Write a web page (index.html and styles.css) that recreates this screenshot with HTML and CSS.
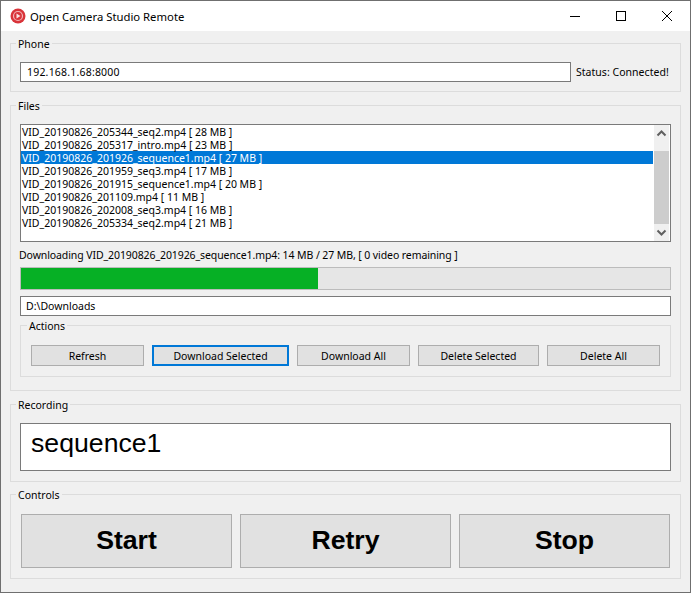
FILE: index.html
```html
<!DOCTYPE html>
<html lang="en">
<head>
<meta charset="utf-8">
<title>Open Camera Studio Remote</title>
<link rel="stylesheet" href="styles.css">
</head>
<body>
<div class="window">
  <header class="titlebar">
    <svg class="app-icon" width="16" height="16" viewBox="0 0 16 16">
      <circle cx="8" cy="8" r="7.500" fill="#d9343a"/>
      <circle cx="8" cy="8" r="4.500" fill="none" stroke="#f3b5b8" stroke-width="1.200"/>
      <path d="M6.500 5.500v5l4-2.500z" fill="#fbe3e4"/>
    </svg>
    <span class="title">Open Camera Studio Remote</span>
    <div class="win-controls">
      <svg width="46" height="30" viewBox="0 0 46 30"><path d="M18 15.500h10" stroke="#000" fill="none"/></svg>
      <svg width="46" height="30" viewBox="0 0 46 30"><rect x="18.500" y="10.500" width="9" height="9" stroke="#000" fill="none"/></svg>
      <svg width="46" height="30" viewBox="0 0 46 30"><path d="M18 10l10 10M28 10l-10 10" stroke="#000" fill="none"/></svg>
    </div>
  </header>
  <main class="content">
    <section class="group group-phone">
      <div class="legend">Phone</div>
      <div class="phone-row">
        <div class="field phone-field">192.168.1.68:8000</div>
        <span class="status">Status: Connected!</span>
      </div>
    </section>
    <section class="group group-files">
      <div class="legend">Files</div>
      <div class="listbox">
        <ul class="files">
          <li>VID_20190826_205344_seq2.mp4 [ 28 MB ]</li>
          <li>VID_20190826_205317_intro.mp4 [ 23 MB ]</li>
          <li class="selected">VID_20190826_201926_sequence1.mp4 [ 27 MB ]</li>
          <li>VID_20190826_201959_seq3.mp4 [ 17 MB ]</li>
          <li>VID_20190826_201915_sequence1.mp4 [ 20 MB ]</li>
          <li>VID_20190826_201109.mp4 [ 11 MB ]</li>
          <li>VID_20190826_202008_seq3.mp4 [ 16 MB ]</li>
          <li>VID_20190826_205334_seq2.mp4 [ 21 MB ]</li>
        </ul>
        <div class="scrollbar">
          <svg class="arrow" width="15" height="17" viewBox="0 0 15 17"><path d="M3.500 10.500l4-4 4 4" fill="none" stroke="#606060" stroke-width="2"/></svg>
          <div class="track"><div class="thumb"></div></div>
          <svg class="arrow" width="15" height="17" viewBox="0 0 15 17"><path d="M3.500 6.500l4 4 4-4" fill="none" stroke="#606060" stroke-width="2"/></svg>
        </div>
      </div>
      <div class="progress-label">Downloading VID_20190826_201926_sequence1.mp4: 14 MB / 27 MB, [ 0 video remaining ]</div>
      <div class="progress"><div class="progress-fill" style="width: 297px"></div></div>
      <div class="field path-field">D:\Downloads</div>
      <section class="group group-actions">
        <div class="legend">Actions</div>
        <div class="actions">
          <button class="btn btn-a">Refresh</button>
          <button class="btn btn-b focused">Download Selected</button>
          <button class="btn btn-a">Download All</button>
          <button class="btn btn-c">Delete Selected</button>
          <button class="btn btn-a">Delete All</button>
        </div>
      </section>
    </section>
    <section class="group group-recording">
      <div class="legend">Recording</div>
      <div class="field recording-field">sequence1</div>
    </section>
    <section class="group group-controls">
      <div class="legend">Controls</div>
      <div class="controls">
        <button class="btn big">Start</button>
        <button class="btn big">Retry</button>
        <button class="btn big">Stop</button>
      </div>
    </section>
  </main>
</div>
</body>
</html>
```
FILE: styles.css
```css
* { box-sizing: border-box; }
html, body { margin: 0; padding: 0; }
body {
  width: 691px;
  height: 593px;
  overflow: hidden;
  font-family: "Noto Sans", "Liberation Sans", sans-serif;
  font-size: 10.500px;
  color: #000;
}
.window {
  width: 691px;
  height: 593px;
  border: 1px solid #6f6f6f;
  background: #f0f0f0;
  display: flex;
  flex-direction: column;
}
.titlebar {
  height: 30px;
  background: #fff;
  display: flex;
  align-items: center;
  padding-left: 9px;
  flex: none;
}
.app-icon { flex: none; }
.title { margin-left: 4px; font-size: 11.300px; }
.win-controls { margin-left: auto; display: flex; }
.win-controls svg { display: block; }
.content { padding: 12px 9px 0; display: flex; flex-direction: column; }
.group { border: 1px solid #dcdcdc; position: relative; }
.legend {
  width: fit-content;
  height: 14px;
  line-height: 14px;
  margin: -7px 0 0 5px;
  padding: 0 2px;
  background: #f0f0f0;
}
.group-phone { height: 49px; width: 671px; }
.group-files { height: 286px; width: 671px; margin-top: 13px; }
.group-recording { height: 78px; width: 671px; margin-top: 13px; }
.group-controls { height: 85px; width: 671px; margin-top: 12px; }
.phone-row { display: flex; align-items: center; margin: 11px 0 0 9px; }
.field {
  background: #fff;
  border: 1px solid #7a7a7a;
  line-height: 18px;
  height: 20px;
  padding-left: 5px;
}
.phone-field { width: 551px; padding-left: 6px; letter-spacing: 0.2px; }
.status { margin-left: 5px; white-space: nowrap; letter-spacing: 0.03px; }
.listbox {
  width: 651px;
  height: 118px;
  margin: 11px 0 0 9px;
  background: #fff;
  border: 1px solid #7a7a7a;
  display: flex;
}
.files { list-style: none; margin: 0; padding: 0; flex: 1; }
.files li { height: 13px; line-height: 14px; padding-left: 1px; white-space: nowrap; }
.files li.selected { background: #0078d7; color: #fff; }
.scrollbar {
  width: 15px;
  margin: 0 1px 0 1px;
  background: #f0f0f0;
  display: flex;
  flex-direction: column;
}
.arrow { flex: none; display: block; }
.track { flex: 1; padding-top: 9px; }
.thumb { height: 73px; background: #cdcdcd; }
.progress-label { margin: 7px 0 0 8px; height: 13px; line-height: 13px; white-space: nowrap; letter-spacing: -0.09px; }
.progress {
  width: 651px;
  height: 23px;
  margin: 5px 0 0 9px;
  background: #e6e6e6;
  border: 1px solid #bcbcbc;
}
.progress-fill { height: 100%; background: #06b025; }
.path-field { width: 651px; margin: 6px 0 0 9px; }
.group-actions { width: 651px; height: 52px; margin: 9px 0 0 9px; }
.group-actions .legend { margin-left: 6px; }
.actions { display: flex; gap: 8px; margin: 12px 0 0 10px; }
.btn {
  background: #e1e1e1;
  border: 1px solid #adadad;
  font: inherit;
  color: #000;
  padding: 0;
  margin: 0;
  height: 21px;
}
.btn-a { width: 113px; }
.btn-b { width: 137px; }
.btn-c { width: 121px; }
.btn.focused { border: 2px solid #0078d7; }
.recording-field {
  width: 651px;
  height: 48px;
  margin: 11px 0 0 9px;
  padding-left: 10px;
  font-family: "Liberation Sans", sans-serif;
  font-size: 26.670px;
  line-height: 38px;
}
.controls { display: flex; gap: 8px; margin: 12px 0 0 10px; }
.btn.big {
  width: 211px;
  height: 54px;
  padding-bottom: 2px;
  font-family: "Liberation Sans", sans-serif;
  font-size: 26.670px;
  font-weight: 700;
}
```
